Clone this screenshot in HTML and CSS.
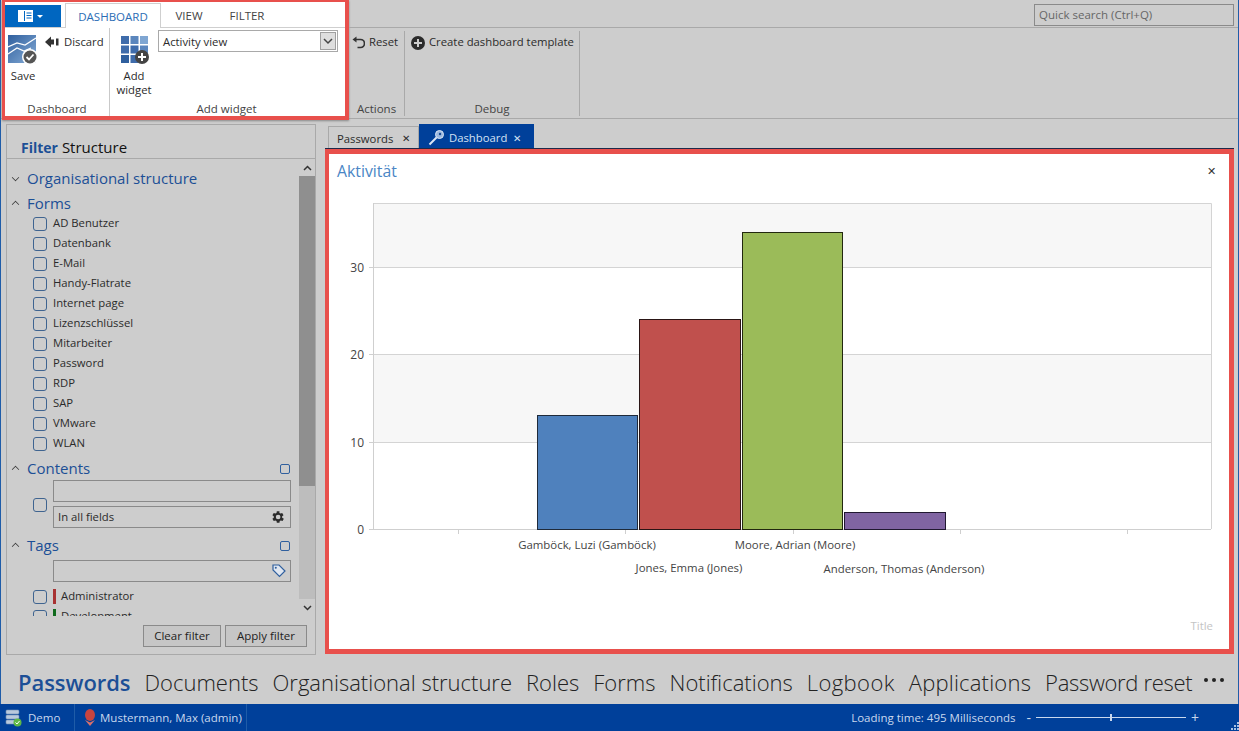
FILE: index.html
```html
<!DOCTYPE html>
<html>
<head>
<meta charset="utf-8">
<title>Dashboard</title>
<link rel="stylesheet" href="styles.css">
</head>
<body>
<div class="app">

<div class="top">
  <div class="hl_ribbon">
    <div class="tabs">
      <div class="app_btn">
        <svg width="32" height="14" viewBox="0 0 32 14"><rect x="1" y="1" width="15" height="12" fill="#fff"/><rect x="7" y="2" width="1" height="10" fill="#0066c0"/><path d="M9.500 4h5M9.500 6.500h5M9.500 9h5" stroke="#0066c0" stroke-width="1"/><path d="M20 6h6l-3 3z" fill="#fff"/></svg>
      </div>
      <div class="tab on">DASHBOARD</div>
      <div class="tab">VIEW</div>
      <div class="tab">FILTER</div>
    </div>
    <div class="groups">
      <div class="group g_dash">
        <div class="g_body">
          <div class="big_btn save_btn">
            <svg width="30" height="30" viewBox="0 0 30 30"><defs><linearGradient id="gs" x1="0" y1="0" x2="1" y2="1"><stop offset="0" stop-color="#2f5f9e"/><stop offset="1" stop-color="#86acd6"/></linearGradient></defs><rect x="0" y="0" width="28" height="28" fill="url(#gs)"/><path d="M0 12l9-4 8 2 11-7M0 19l9-6 7 3 7-3" fill="none" stroke="#fff" stroke-width="1.200"/><circle cx="22" cy="22" r="8" fill="#fff"/><circle cx="22" cy="22" r="6.500" fill="#555"/><path d="M18.500 22l2.500 2.500 4.500-5" fill="none" stroke="#fff" stroke-width="1.800"/></svg>
            <span>Save</span>
          </div>
          <div class="small_btn">
            <svg width="14" height="12" viewBox="0 0 14 12"><path d="M0 6l6-5.500v11z" fill="#333"/><rect x="6" y="3.500" width="3" height="5" fill="#333"/><rect x="11" y="2.500" width="2.500" height="7" fill="#333"/></svg>
            <span>Discard</span>
          </div>
        </div>
        <div class="g_title">Dashboard</div>
      </div>
      <div class="group g_add">
        <div class="g_body">
          <div class="big_btn add_btn">
            <svg width="28" height="28" viewBox="0 0 28 28"><g fill="#3f6cab"><rect x="0" y="0" width="8" height="8"/><rect x="9.500" y="0" width="8" height="8" fill="#5b86bd"/><rect x="19" y="0" width="8" height="8" fill="#7fa6d2"/><rect x="0" y="9.500" width="8" height="8"/><rect x="9.500" y="9.500" width="8" height="8"/><rect x="19" y="9.500" width="8" height="8" fill="#5b86bd"/><rect x="0" y="19" width="8" height="8" fill="#2f5f9e"/><rect x="9.500" y="19" width="8" height="8"/></g><circle cx="21" cy="21" r="7" fill="#444"/><path d="M21 17v8M17 21h8" stroke="#fff" stroke-width="2"/></svg>
            <span>Add<br>widget</span>
          </div>
          <div class="combo">
            <span>Activity view</span>
            <div class="combo_arrow"><svg width="10" height="7" viewBox="0 0 10 7"><path d="M1 1l4 4 4-4" fill="none" stroke="#444" stroke-width="1.500"/></svg></div>
          </div>
        </div>
        <div class="g_title">Add widget</div>
      </div>
    </div>
  </div>

  <div class="top_rest">
    <div class="search_bar"><div class="quick">Quick search (Ctrl+Q)</div></div>
    <div class="groups">
      <div class="group g_act">
        <div class="g_body">
          <div class="small_btn">
            <svg width="13" height="13" viewBox="0 0 13 13"><path d="M3.500 3.500h5a3.500 3.500 0 0 1 0 8h-3" fill="none" stroke="#333" stroke-width="1.700"/><path d="M0.500 3.500l4-3v6z" fill="#333"/></svg>
            <span>Reset</span>
          </div>
        </div>
        <div class="g_title">Actions</div>
      </div>
      <div class="group g_debug">
        <div class="g_body">
          <div class="small_btn">
            <svg width="14" height="14" viewBox="0 0 14 14"><circle cx="7" cy="7" r="7" fill="#2b2b2b"/><path d="M7 3v8M3 7h8" stroke="#cdcdcd" stroke-width="2"/></svg>
            <span>Create dashboard template</span>
          </div>
        </div>
        <div class="g_title">Debug</div>
      </div>
    </div>
  </div>
</div>

<div class="main">
  <div class="filter">
    <div class="f_head"><b>Filter</b> <span>Structure</span></div>
    <div class="f_scroll">
      <div class="f_list">
        <div class="f_sec"><i class="chev down"></i>Organisational structure</div>
        <div class="f_sec sec_forms"><i class="chev"></i>Forms</div>
        <div class="f_item"><i class="chk"></i>AD Benutzer</div>
        <div class="f_item"><i class="chk"></i>Datenbank</div>
        <div class="f_item"><i class="chk"></i>E-Mail</div>
        <div class="f_item"><i class="chk"></i>Handy-Flatrate</div>
        <div class="f_item"><i class="chk"></i>Internet page</div>
        <div class="f_item"><i class="chk"></i>Lizenzschlüssel</div>
        <div class="f_item"><i class="chk"></i>Mitarbeiter</div>
        <div class="f_item"><i class="chk"></i>Password</div>
        <div class="f_item"><i class="chk"></i>RDP</div>
        <div class="f_item"><i class="chk"></i>SAP</div>
        <div class="f_item"><i class="chk"></i>VMware</div>
        <div class="f_item"><i class="chk"></i>WLAN</div>
        <div class="f_sec sec_contents"><i class="chev"></i>Contents<i class="chk small"></i></div>
        <div class="contents_row">
          <i class="chk"></i>
          <div class="contents_inputs">
            <div class="inp"></div>
            <div class="inp">In all fields
              <svg width="16" height="16" viewBox="0 0 24 24"><path fill="#2b2b2b" d="M19.400 13a7.500 7.500 0 0 0 0-2l2.100-1.600-2-3.500-2.500 1a7.500 7.500 0 0 0-1.700-1L15.400 3.300h-4l-.4 2.600a7.500 7.500 0 0 0-1.700 1l-2.500-1-2 3.500L6.900 11a7.500 7.500 0 0 0 0 2l-2.100 1.600 2 3.500 2.500-1a7.500 7.500 0 0 0 1.700 1l.4 2.600h4l.4-2.600a7.500 7.500 0 0 0 1.700-1l2.500 1 2-3.500zM13.400 15.500a3.500 3.500 0 1 1 0-7 3.500 3.500 0 0 1 0 7z" transform="translate(-1.200 0)"/></svg>
            </div>
          </div>
        </div>
        <div class="f_sec sec_tags"><i class="chev"></i>Tags<i class="chk small"></i></div>
        <div class="tags_row">
          <div class="inp">
            <svg width="14" height="14" viewBox="0 0 14 14"><path d="M1 1h6l6 6-5.500 5.500L1 6z" fill="#dfe6f0" stroke="#2f5f9e" stroke-width="1.200"/><circle cx="3.800" cy="3.800" r="1" fill="#2f5f9e"/></svg>
          </div>
        </div>
        <div class="f_item tag"><i class="chk"></i><i class="tag_bar red"></i>Administrator</div>
        <div class="f_item tag"><i class="chk"></i><i class="tag_bar green"></i>Development</div>
      </div>
      <div class="sbar">
        <div class="sbar_btn"><svg width="9" height="6" viewBox="0 0 9 6"><path d="M1 5l3.500-3.500L8 5" fill="none" stroke="#333" stroke-width="1.500"/></svg></div>
        <div class="sbar_track"><div class="sbar_thumb"></div></div>
        <div class="sbar_btn"><svg width="9" height="6" viewBox="0 0 9 6"><path d="M1 1l3.500 3.500L8 1" fill="none" stroke="#333" stroke-width="1.500"/></svg></div>
      </div>
    </div>
    <div class="f_foot">
      <div class="btn">Clear filter</div>
      <div class="btn">Apply filter</div>
    </div>
  </div>

  <div class="content">
    <div class="doc_tabs">
      <div class="doc_tab">Passwords <span class="x">✕</span></div>
      <div class="doc_tab on">
        <svg width="17" height="17" viewBox="0 0 17 17"><circle cx="11.500" cy="5.500" r="4" fill="#9db9de" stroke="#dbe6f5"/><path d="M8.500 8.500L1.500 15.500" stroke="#dbe6f5" stroke-width="2"/><circle cx="12" cy="5" r="1.200" fill="#174a94"/></svg>
        Dashboard <span class="x">✕</span>
      </div>
    </div>
    <div class="card">
      <div class="card_head"><span>Aktivität</span><span class="card_x">✕</span></div>
      <svg class="chart" viewBox="329 194 900 455">
        <rect x="374" y="203" width="837" height="64" fill="#f7f7f7"/>
        <rect x="374" y="354" width="837" height="88" fill="#f7f7f7"/>
        <path d="M374 203.500H1211.500V529M374 267.500H1211M374 354.500H1211M374 442.500H1211" fill="none" stroke="#d4d4d4"/>
        <path d="M373.500 203V529M369 529.500H1211M369 267.500H374M369 354.500H374M369 442.500H374M458.500 529V534M625.500 529V534M793.500 529V534M960.500 529V534M1127.500 529V534" fill="none" stroke="#cfcfcf"/>
        <rect x="537.500" y="415.500" width="100" height="114" fill="#4f81bd" stroke="#1f2a3a"/>
        <rect x="639.500" y="319.500" width="101" height="210" fill="#c0504d" stroke="#2a1515"/>
        <rect x="742.500" y="232.500" width="100" height="297" fill="#9bbb59" stroke="#22280f"/>
        <rect x="844.500" y="512.500" width="101" height="17" fill="#8064a2" stroke="#201830"/>
        <g class="c_y">
          <text x="364" y="272">30</text>
          <text x="364" y="359">20</text>
          <text x="364" y="447">10</text>
          <text x="364" y="534">0</text>
        </g>
        <g class="c_x">
          <text x="587" y="549">Gamböck, Luzi (Gamböck)</text>
          <text x="689" y="572">Jones, Emma (Jones)</text>
          <text x="795" y="549">Moore, Adrian (Moore)</text>
          <text x="904" y="573">Anderson, Thomas (Anderson)</text>
        </g>
        <text class="c_title" x="1213" y="630">Title</text>
      </svg>
    </div>
  </div>
</div>

<div class="nav">
  <div class="nav_item on">Passwords</div>
  <div class="nav_item">Documents</div>
  <div class="nav_item">Organisational structure</div>
  <div class="nav_item">Roles</div>
  <div class="nav_item">Forms</div>
  <div class="nav_item">Notifications</div>
  <div class="nav_item logbook">Logbook</div>
  <div class="nav_item apps">Applications</div>
  <div class="nav_item reset">Password reset</div>
  <div class="nav_more"><i></i><i></i><i></i></div>
</div>

<div class="status">
  <div class="st_cell st_demo">
    <svg width="17" height="18" viewBox="0 0 17 18"><g fill="#b9c9dd" stroke="#6f8db3" stroke-width=".6"><rect x="1" y="1" width="13" height="4" rx="1"/><rect x="1" y="6" width="13" height="4" rx="1"/><rect x="1" y="11" width="13" height="4" rx="1"/></g><circle cx="12.500" cy="13.500" r="4" fill="#5fb946"/><path d="M10.500 13.500l1.500 1.500 2.500-3" fill="none" stroke="#fff"/></svg>
    Demo
  </div>
  <div class="st_cell st_user">
    <svg width="12" height="18" viewBox="0 0 12 18"><ellipse cx="6" cy="6" rx="5" ry="6" fill="#c8443f"/><path d="M1 11l5 6 5-6-5 2.500z" fill="#d9716c"/></svg>
    Mustermann, Max (admin)
  </div>
  <div class="st_fill"></div>
  <div class="st_load">Loading time: 495 Milliseconds</div>
  <div class="zoom">
    <span>-</span>
    <div class="zoom_line"><i></i></div>
    <span>+</span>
  </div>
  <svg class="grip" width="9" height="9" viewBox="0 0 9 9"><path d="M7 0h2v2H7zM4 3h2v2H4zM7 3h2v2H7zM1 6h2v2H1zM4 6h2v2H4zM7 6h2v2H7z" fill="#a9c2e2"/></svg>
</div>

</div>
</body>
</html>
```

FILE: styles.css
```css
* {box-sizing:border-box;}
html, body {margin:0;padding:0;height:100%;overflow:hidden;}
body {font-family:"Open Sans","Liberation Sans",sans-serif;font-size:11.3px;color:#2b2b2b;background:#cdcdcd;}
i {font-style:normal;display:block;}
svg {flex:none;}

.app {width:1239px;height:731px;display:flex;flex-direction:column;border-left:1px solid #1f5ca8;border-right:1px solid #1f5ca8;}

/* ribbon */
.top {display:flex;height:119px;flex:none;border-bottom:1px solid #a9a9a9;}
.hl_ribbon {width:347px;height:120px;background:#fff;border:4px solid #e8504c;border-left-width:3px;border-top-width:2px;box-shadow:0 1px 2px #888;display:flex;flex-direction:column;margin-left:1px;flex:none;}
.tabs {display:flex;height:26px;flex:none;border-bottom:1px solid #cfcfcf;}
.app_btn {width:56px;height:22px;margin-top:3px;background:#0066c0;display:flex;align-items:center;justify-content:center;}
.tab {width:56px;line-height:27px;text-align:center;font-size:11.500px;color:#444;}
.tab:nth-child(4) {width:60px;}
.tab.on {width:96px;margin-left:4px;color:#2b6db5;background:#fff;border:1px solid #cfcfcf;border-bottom:none;height:25px;line-height:25px;margin-top:1px;}

.groups {display:flex;flex:1;}
.group {display:flex;flex-direction:column;padding:2px 0 1px;border-right:1px solid #c9c9c9;}
.g_body {flex:1;display:flex;}
.g_title {text-align:center;height:12px;line-height:12px;color:#444;font-size:11.500px;}
.g_dash {width:105px;}
.g_add {width:233px;border-right:none;}
.big_btn {display:flex;flex-direction:column;align-items:center;text-align:center;line-height:14px;}
.save_btn {width:36px;padding-top:5px;gap:4px;}
.add_btn {width:48px;padding-top:6px;gap:5px;}
.add_btn svg {margin-left:1px;}
.small_btn {display:flex;align-items:flex-start;gap:5px;line-height:16px;margin:4px 0 0 4px;white-space:nowrap;}
.small_btn svg {margin-top:2px;}
.combo {width:180px;height:22px;border:1px solid #a9a9a9;display:flex;align-items:center;justify-content:space-between;padding-left:4px;}
.combo_arrow {width:16px;height:18px;margin-right:1px;background:#dedede;border:1px solid #a0a0a0;display:flex;align-items:center;justify-content:center;}

.top_rest {flex:1;display:flex;flex-direction:column;}
.search_bar {height:28px;flex:none;border-bottom:1px solid #a9a9a9;display:flex;justify-content:flex-end;padding:4px 4px 0 0;}
.quick {width:200px;height:22px;line-height:20px;border:1px solid #8a8a8a;padding-left:4px;color:#666;font-size:11.500px;}
.top_rest .groups {padding:3px 0 2px;}
.top_rest .group {border-right:1px solid #a9a9a9;padding:0;}
.top_rest .g_title {height:14px;line-height:14px;}
.top_rest .small_btn {margin:3px 0 0 3px;gap:4px;}
.top_rest .g_debug .small_btn {margin-left:6px;}
.g_act {width:56px;}
.g_debug {width:175px;}

/* main area */
.main {flex:1;display:flex;min-height:0;padding:5px 4px 5px 5px;}
.filter {width:310px;flex:none;border:1px solid #a9a9a9;display:flex;flex-direction:column;}
.f_head {height:34px;flex:none;border-bottom:1px solid #a9a9a9;padding:13px 0 0 14px;line-height:18px;color:#111;white-space:nowrap;}
.f_head b {color:#1c4f96;font-weight:700;font-size:14px;}
.f_head span {font-size:15px;margin-left:1px;}
.f_scroll {flex:1;display:flex;min-height:0;}
.f_list {flex:1;overflow:hidden;padding-top:7px;}
.f_sec {height:25px;line-height:25px;font-size:15px;color:#1c4f96;display:flex;align-items:center;gap:8px;padding-left:5px;position:relative;}
.sec_forms {margin-bottom:-3px;}
.sec_contents {margin:3px 0 -1px;}
.sec_tags {margin-top:5px;}
.chev {width:7px;height:7px;border-left:1.500px solid #333;border-top:1.500px solid #333;transform:rotate(45deg) scale(.75);margin-top:2px;flex:none;}
.chev.down {transform:rotate(225deg) scale(.75);margin-top:-3px;}
.f_item {height:20px;display:flex;align-items:center;gap:6px;padding-left:26px;line-height:20px;color:#2b2b2b;}
.chk {width:14px;height:14px;border:1.500px solid #3f6490;border-radius:3px;flex:none;margin-top:1px;}
.chk.small {width:10px;height:10px;border-width:1px;border-color:#2f5f9e;position:absolute;right:9px;top:8px;margin:0;border-radius:2px;}
.contents_row {display:flex;align-items:center;gap:6px;padding-left:26px;}
.contents_inputs {width:238px;display:flex;flex-direction:column;gap:4px;}
.inp {height:22px;border:1px solid #8a8a8a;padding:0 4px;line-height:22px;display:flex;justify-content:space-between;align-items:center;}
.inp svg {margin-left:auto;}
.tags_row {width:238px;height:26px;margin:2px 0 0 46px;}
.f_item.tag {gap:6px;}
.tag_bar {width:3px;height:15px;flex:none;margin:1px -1px 0 0;}
.tag_bar.red {background:#a83232;}
.tag_bar.green {background:#0f6a1d;}
.sbar {width:16px;flex:none;display:flex;flex-direction:column;background:#bdbdbd;}
.sbar_btn {height:17px;flex:none;display:flex;align-items:center;justify-content:center;background:#cdcdcd;}
.sbar_track {flex:1;}
.sbar_thumb {height:310px;background:#8f8f8f;}
.f_foot {height:38px;flex:none;display:flex;justify-content:flex-end;gap:4px;padding:9px 8px 0 0;}
.btn {height:22px;line-height:20px;border:1px solid #8a8a8a;background:#c6c6c6;text-align:center;width:78px;color:#222;font-size:11.500px;}
.btn:last-child {width:82px;}

.content {flex:1;display:flex;flex-direction:column;margin-left:9px;min-width:0;}
.doc_tabs {display:flex;height:25px;padding-left:3px;border-bottom:1px solid #1d2a4a;flex:none;align-items:flex-end;}
.doc_tab {width:91px;height:22px;padding:1px 6px 0 8px;border:1px solid #a9a9a9;border-bottom:none;display:flex;align-items:center;gap:7px;white-space:nowrap;color:#2b2b2b;}
.doc_tab.on {width:115px;height:24px;padding:2px 8px 0;background:#00409a;border-color:#00409a;color:#d4e2f4;gap:4px;}
.x {font-size:10px;margin-left:2px;}
.card {flex:1;margin-bottom:1px;border:5px solid #e8504c;border-left-width:4px;background:#fff;display:flex;flex-direction:column;min-height:0;}
.card_head {height:40px;flex:none;display:flex;justify-content:space-between;padding:6px 13px 0 8px;font-size:15.800px;line-height:22px;color:#4a86c5;}
.card_x {color:#333;font-size:11px;}
.chart {width:900px;height:455px;display:block;flex:none;}
.chart text {font-family:"Open Sans","Liberation Sans",sans-serif;font-size:11.400px;fill:#444;}
.c_y text {text-anchor:end;font-size:12px;}
.c_x text {text-anchor:middle;}
.chart .c_title {text-anchor:end;fill:#c4c4c4;}

/* bottom */
.nav {height:44px;flex:none;display:flex;align-items:center;gap:14px;padding:0 0 1px 17px;font-size:22px;font-weight:300;color:#222;white-space:nowrap;}
.nav_item.on {color:#1c4f96;font-weight:600;letter-spacing:-.05px;}
.nav_item.logbook {letter-spacing:.4px;}
.nav_item.apps {letter-spacing:.2px;}
.nav_item.reset {letter-spacing:-.3px;}
.nav_more {display:flex;gap:4px;margin-left:-2px;margin-bottom:3px;}
.nav_more i {width:4px;height:4px;border-radius:50%;background:#222;}
.status {height:27px;flex:none;margin:0 -1px;background:#00409a;color:#c9d8ee;font-size:11.500px;display:flex;align-items:center;white-space:nowrap;position:relative;}
.st_cell {height:100%;display:flex;align-items:center;border-right:1px solid #1f5ca8;}
.st_demo {width:75px;padding-left:5px;gap:6px;}
.st_user {width:172px;padding-left:9px;gap:4px;}
.st_fill {flex:1;}
.st_load {margin-right:11px;}
.zoom {display:flex;align-items:center;gap:5px;margin-right:40px;font-size:14px;}
.zoom_line {width:150px;height:1px;background:#c9d8ee;position:relative;}
.zoom_line i {width:2px;height:7px;background:#c9d8ee;position:absolute;left:74px;top:-3px;}
.grip {position:absolute;right:0;bottom:0;}
```
